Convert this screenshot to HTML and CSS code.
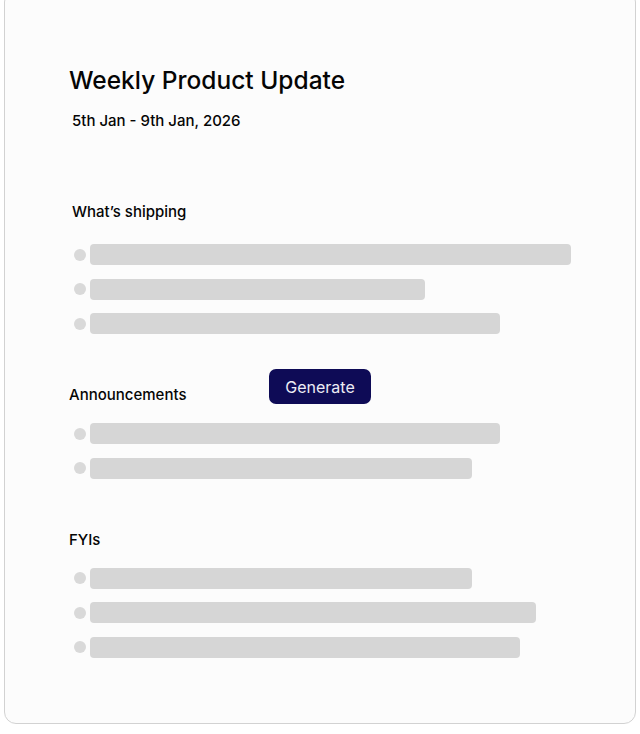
FILE: index.html
```html
<!DOCTYPE html>
<html lang="en">
<head>
    <meta charset="UTF-8">
    <meta name="viewport" content="width=device-width, initial-scale=1.0">
    <title>Weekly Product Update</title>
    <link rel="stylesheet" href="styles.css">
</head>
<body>
    <div class="card">
        <h1 class="title">Weekly Product Update</h1>
        <p class="date">5th Jan - 9th Jan, 2026</p>

        <div class="section section-first">
            <h3 class="section-title shifted">What’s shipping</h3>
            <ul class="lines">
                <li><span class="dot"></span><span class="bar" style="width: 481px"></span></li>
                <li><span class="dot"></span><span class="bar" style="width: 335px"></span></li>
                <li><span class="dot"></span><span class="bar" style="width: 410px"></span></li>
            </ul>
        </div>

        <div class="section">
            <h3 class="section-title">Announcements</h3>
            <ul class="lines">
                <li><span class="dot"></span><span class="bar" style="width: 410px"></span></li>
                <li><span class="dot"></span><span class="bar" style="width: 382px"></span></li>
            </ul>
        </div>

        <div class="section">
            <h3 class="section-title">FYIs</h3>
            <ul class="lines">
                <li><span class="dot"></span><span class="bar" style="width: 382px"></span></li>
                <li><span class="dot"></span><span class="bar" style="width: 446px"></span></li>
                <li><span class="dot"></span><span class="bar" style="width: 430px"></span></li>
            </ul>
        </div>

        <button class="generate">Generate</button>
    </div>
</body>
</html>
```

FILE: styles.css
```css
body {
    margin: 0;
    padding: 0;
    background: #ffffff;
    font-family: Inter, "Noto Sans", sans-serif;
    color: #050505;
    overflow: hidden;
}
.card {
    position: relative;
    box-sizing: border-box;
    margin: -10px 4px 0;
    height: 734px;
    padding: 74px 0 0 64px;
    background: #fcfcfc;
    border: 1px solid #d2d2d2;
    border-radius: 12px;
}
.title {
    margin: 0;
    font-size: 24.5px;
    line-height: 30px;
    font-weight: 500;
}
.date {
    margin: 16px 0 0 3px;
    font-size: 15px;
    line-height: 20px;
    font-weight: 500;
}
.section {
    margin-top: 51px;
}
.section-first {
    margin-top: 71px;
}
.section-title {
    margin: 0 0 18px;
    font-size: 15px;
    line-height: 20px;
    font-weight: 500;
}
.section-first .section-title {
    margin-bottom: 22px;
}
.shifted {
    margin-left: 3px;
}
.lines {
    list-style: none;
    margin: 0;
    padding: 0 0 0 5px;
    display: flex;
    flex-direction: column;
    gap: 13.5px;
}
.lines li {
    display: flex;
    align-items: center;
    gap: 4px;
    height: 21px;
}
.dot {
    width: 12px;
    height: 12px;
    border-radius: 50%;
    background: #d9d9d9;
}
.bar {
    height: 21px;
    border-radius: 4px;
    background: #d6d6d6;
}
.generate {
    position: absolute;
    left: 264px;
    top: 378px;
    width: 102px;
    height: 35px;
    border: none;
    border-radius: 7px;
    background: #0e0b56;
    color: #ececf4;
    font-family: Inter, "Noto Sans", sans-serif;
    font-size: 16px;
    cursor: pointer;
}
```
